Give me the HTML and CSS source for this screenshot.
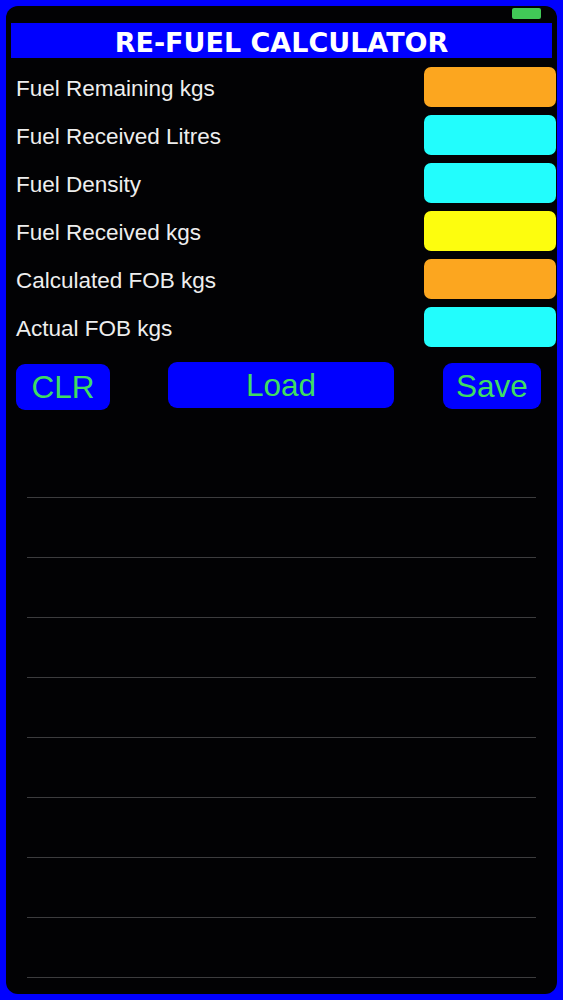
FILE: index.html
```html
<!DOCTYPE html>
<html lang="en">
<head>
    <meta charset="UTF-8">
    <meta name="viewport" content="width=device-width, initial-scale=1.0">
    <title>Re-Fuel Calculator</title>
    <link rel="stylesheet" href="styles.css">
</head>
<body>
    <div class="screen">
        <div class="status-bar">
            <span class="battery"></span>
        </div>
        <h1 class="title">RE-FUEL CALCULATOR</h1>
        <main class="fields">
            <div class="field">
                <span class="label">Fuel Remaining kgs</span>
                <span class="box orange"></span>
            </div>
            <div class="field">
                <span class="label">Fuel Received Litres</span>
                <span class="box cyan"></span>
            </div>
            <div class="field">
                <span class="label">Fuel Density</span>
                <span class="box cyan"></span>
            </div>
            <div class="field">
                <span class="label">Fuel Received kgs</span>
                <span class="box yellow"></span>
            </div>
            <div class="field">
                <span class="label">Calculated FOB kgs</span>
                <span class="box orange"></span>
            </div>
            <div class="field">
                <span class="label">Actual FOB kgs</span>
                <span class="box cyan"></span>
            </div>
        </main>
        <div class="actions">
            <button class="btn btn-clr">CLR</button>
            <button class="btn btn-load">Load</button>
            <button class="btn btn-save">Save</button>
        </div>
        <ul class="log">
            <li></li>
            <li></li>
            <li></li>
            <li></li>
            <li></li>
            <li></li>
            <li></li>
            <li></li>
            <li></li>
        </ul>
    </div>
</body>
</html>
```

FILE: styles.css
```css
html, body {
    margin: 0;
    padding: 0;
    background: #0000ff;
}

body {
    font-family: "Liberation Sans", Arial, sans-serif;
    padding: 6px;
    height: 1000px;
    box-sizing: border-box;
}

.screen {
    background: #020204;
    border-radius: 12px;
    height: 988px;
    overflow: hidden;
}

.status-bar {
    height: 17px;
    display: flex;
    justify-content: flex-end;
    align-items: flex-start;
    padding-right: 16px;
}

.battery {
    display: block;
    width: 29px;
    height: 11px;
    margin-top: 2px;
    background: #41c957;
    border-radius: 2px;
}

.title {
    margin: 0 5px;
    height: 35px;
    background: #0000ff;
    color: #fff;
    font-family: "DejaVu Sans", Verdana, sans-serif;
    font-weight: bold;
    font-size: 27px;
    line-height: 40px;
    text-align: center;
    overflow: hidden;
}

.fields {
    display: flex;
    flex-direction: column;
    gap: 8px;
    margin-top: 9px;
    padding: 0 1px 0 10px;
}

.field {
    display: flex;
    justify-content: space-between;
    align-items: center;
    height: 40px;
}

.label {
    color: #eeeeee;
    font-size: 22.5px;
    padding-top: 3px;
}

.box {
    width: 132px;
    height: 40px;
    border-radius: 7px;
}

.orange {
    background: #fca61f;
}

.cyan {
    background: #22fdfd;
}

.yellow {
    background: #fdfd0e;
}

.actions {
    display: flex;
    align-items: flex-start;
    margin-top: 15px;
    padding: 0 16px 0 10px;
}

.btn {
    background: #0000ff;
    border: none;
    border-radius: 9px;
    color: #3fdd62;
    font-family: "Liberation Sans", Arial, sans-serif;
    font-size: 31.5px;
    height: 46px;
    padding: 0;
    line-height: 46px;
}

.btn-clr {
    width: 94px;
    margin-top: 2px;
}

.btn-load {
    width: 226px;
    margin-left: 58px;
}

.btn-save {
    width: 98px;
    margin-left: auto;
    margin-top: 1px;
}

.log {
    list-style: none;
    margin: 28px 21px 0;
    padding: 0;
}

.log li {
    height: 59px;
    border-bottom: 1px solid #3c3c3e;
}
```
